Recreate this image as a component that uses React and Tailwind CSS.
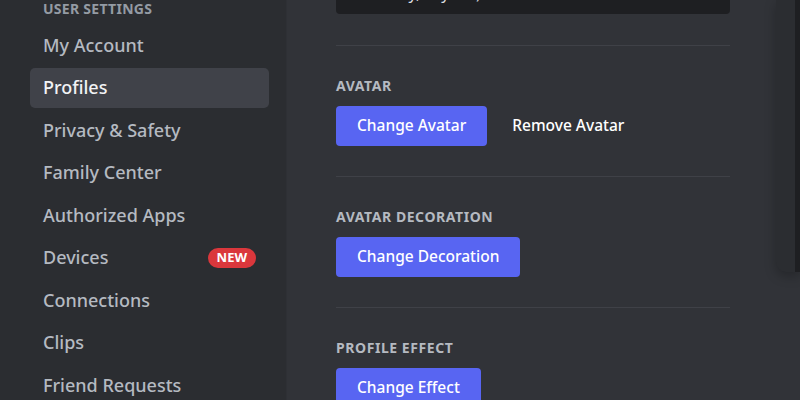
import React from 'react';

const font = { fontFamily: '"Noto Sans", "Open Sans", sans-serif' };

const navItems = [
    { label: 'My Account' },
    { label: 'Profiles', active: true },
    { label: 'Privacy & Safety' },
    { label: 'Family Center' },
    { label: 'Authorized Apps' },
    { label: 'Devices', badge: 'NEW' },
    { label: 'Connections' },
    { label: 'Clips' },
    { label: 'Friend Requests' },
];

function NavItem({ label, active, badge }) {
    return (
        <div
            className={
                'h-10 mb-[2.5px] px-[13px] rounded-[5px] flex items-center justify-between text-[18px] font-medium ' +
                (active ? 'bg-[#404249] text-[#f2f3f5]' : 'text-[#b5bac1]')
            }
        >
            <span>{label}</span>
            {badge && (
                <span className="h-5 px-[9px] rounded-full bg-[#da373c] text-white text-[13px] font-bold flex items-center leading-none">
                    {badge}
                </span>
            )}
        </div>
    );
}

function Section({ title, children }) {
    return (
        <div>
            <div className="h-px bg-[#3f4147]" />
            <div className="pt-[32px] pb-[30px]">
                <h3 className="h-4 leading-4 text-[14px] font-bold uppercase text-[#b5bac1] tracking-[0.04em]">
                    {title}
                </h3>
                <div className="mt-3 flex items-center">{children}</div>
            </div>
        </div>
    );
}

function PrimaryButton({ children }) {
    return (
        <button className="h-10 px-[21px] rounded-[4px] bg-[#5865f2] text-white text-[15.5px] font-medium">
            {children}
        </button>
    );
}

export default function App() {
    return (
        <div className="flex h-[400px] w-[800px] overflow-hidden bg-[#313338]" style={font}>
            <aside className="w-[287px] shrink-0 bg-[#2b2d31] pl-[30px] pr-[17px] border-r border-[#2e3035]">
                <h2 className="pl-[13px] pt-px h-[25px] text-[14px] leading-4 font-bold uppercase text-[#949ba4] tracking-[0.02em]">
                    User Settings
                </h2>
                {navItems.map((item) => (
                    <NavItem key={item.label} {...item} />
                ))}
            </aside>

            <main className="flex-1 flex pl-[49px]">
                <div className="w-[394px] shrink-0">
                    <div className="h-[14px] bg-[#1e1f22] rounded-b-[4px] overflow-hidden pl-[52px]">
                        <p className="-mt-[17px] text-[16px] leading-5 text-[#dbdee1]">
                            Hey, say hi :)
                        </p>
                    </div>
                    <div className="h-[31px]" />
                    <Section title="Avatar">
                        <PrimaryButton>Change Avatar</PrimaryButton>
                        <span className="ml-[25px] text-[15.5px] font-medium text-white">Remove Avatar</span>
                    </Section>
                    <Section title="Avatar Decoration">
                        <PrimaryButton>Change Decoration</PrimaryButton>
                    </Section>
                    <Section title="Profile Effect">
                        <PrimaryButton>Change Effect</PrimaryButton>
                    </Section>
                </div>
                <div className="ml-auto w-[24px] h-[272px] rounded-bl-[10px] bg-[#2b2d31] flex justify-end shadow-[0_4px_12px_rgba(0,0,0,0.25)]">
                    <div className="w-[5px] h-full bg-[#1e1f22]" />
                </div>
            </main>
        </div>
    );
}
